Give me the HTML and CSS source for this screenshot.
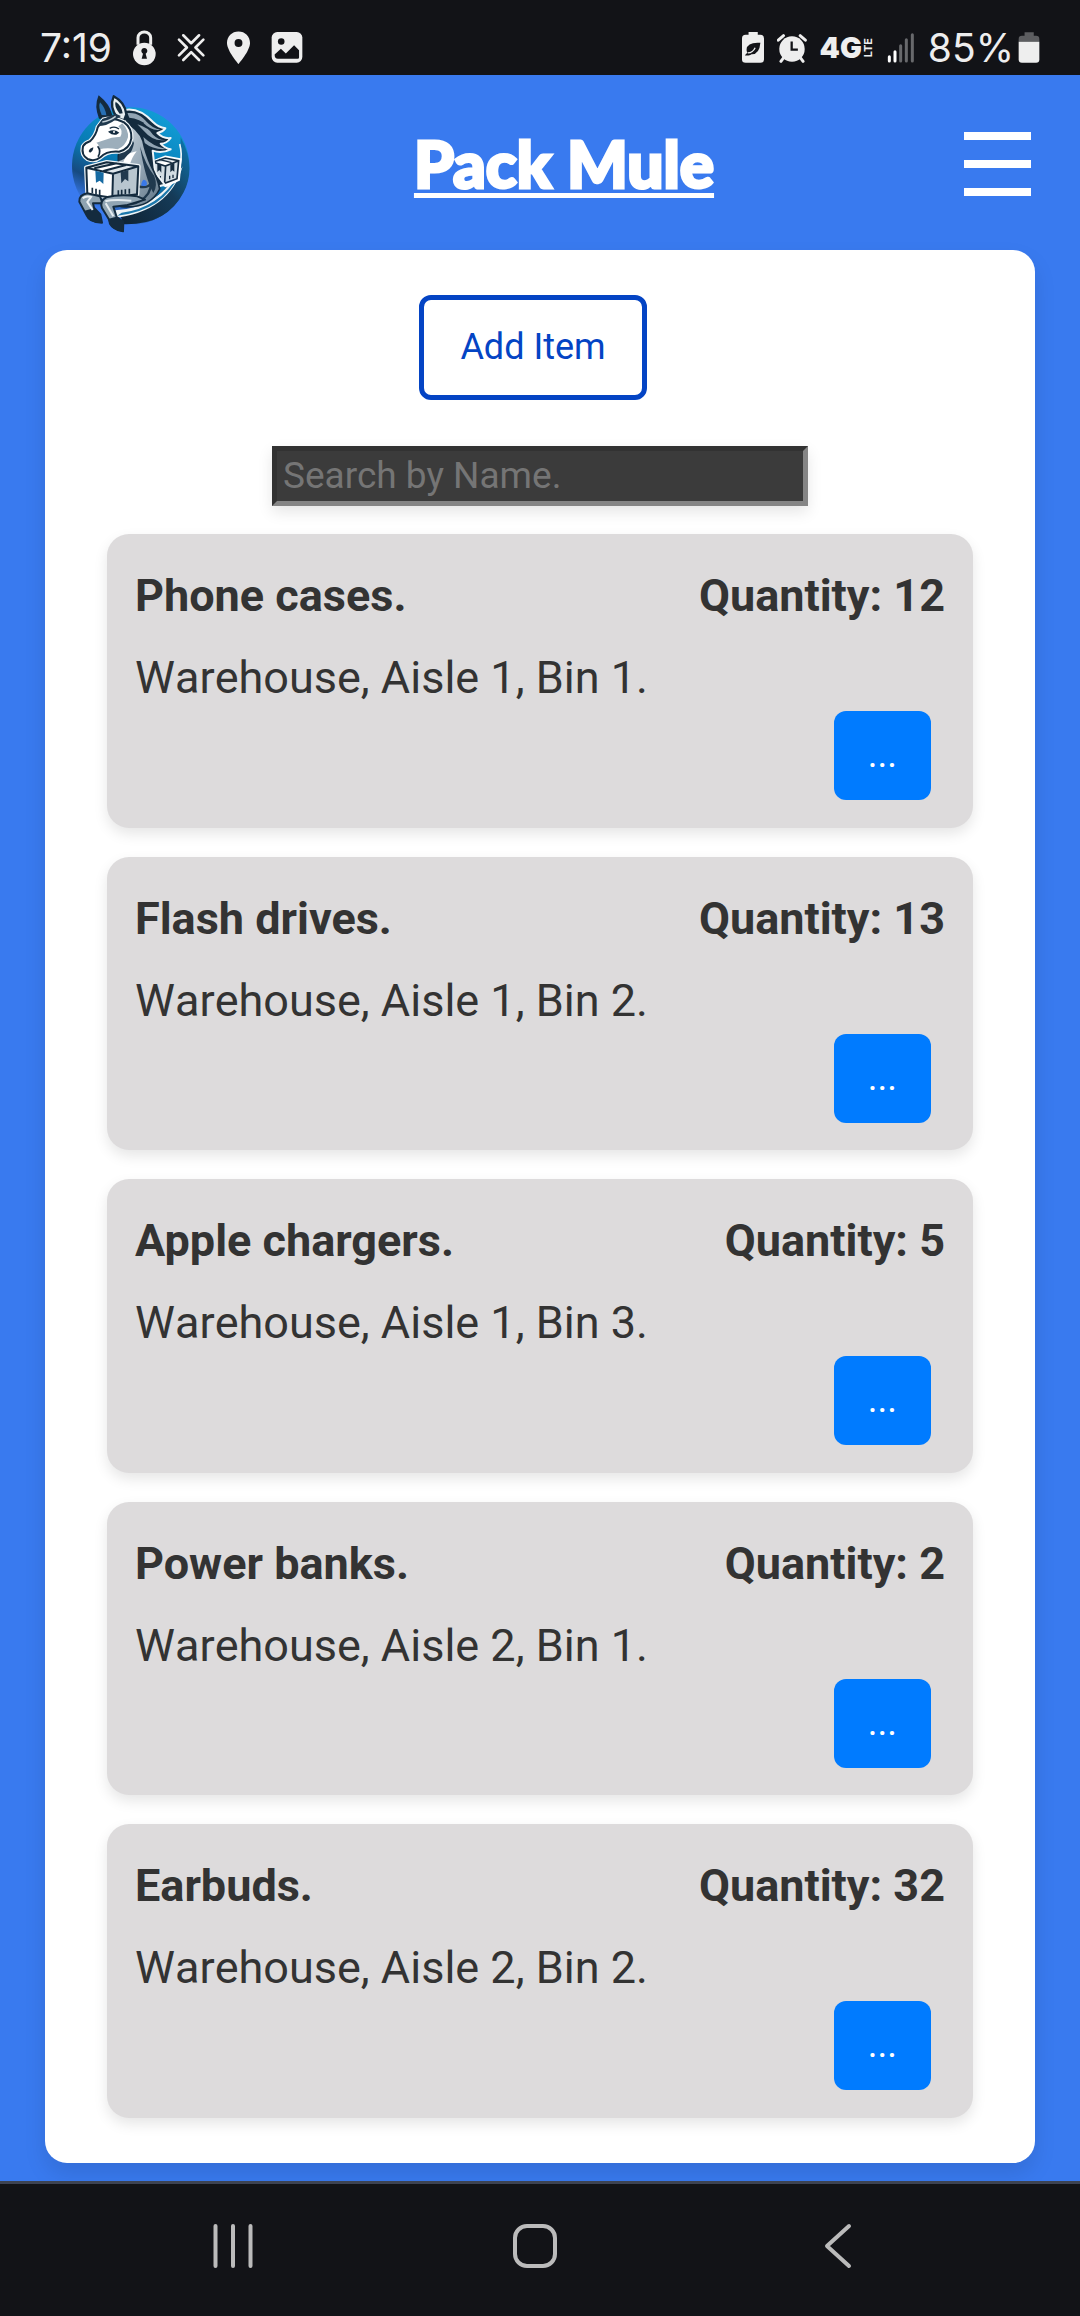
FILE: index.html
```html
<!DOCTYPE html>
<html lang="en">
<head>
<meta charset="utf-8">
<meta name="viewport" content="width=device-width">
<title>Pack Mule</title>
<link rel="stylesheet" href="styles.css">
</head>
<body>
<div class="status">
  <div class="status-left">
    <span class="status-text clock">7:19</span>
    <svg width="25" height="36" viewBox="405 88 75 108"><path d="M423 132V111a19 17 0 0 1 38 0v21" fill="none" stroke="#eee" stroke-width="9"/><circle cx="442" cy="160" r="34" fill="#eee"/><path d="M434 174l4-15a9 9 0 1 1 8 0l4 15z" fill="#121317"/></svg>
    <svg width="29" height="29" viewBox="540 98 88 88" fill="none" stroke="#eee" stroke-width="8" stroke-linecap="round" stroke-linejoin="round"><path d="M559 105l24 24 24-24M559 180l24-24 24 24M546 118l24 24-24 24M620 118l-24 24 24 24"/></svg>
    <svg width="25" height="34" viewBox="687 92 76 102"><path fill="#eee" fill-rule="evenodd" d="M725 93c-20 0-35 15-35 35 0 24 35 64 35 64s35-40 35-64c0-20-15-35-35-35zm0 23a12 12 0 1 1 0 24 12 12 0 0 1 0-24z"/></svg>
    <svg width="32" height="33" viewBox="817 94 97 98"><rect x="819" y="96" width="93" height="93" rx="17" fill="#eee"/><circle cx="848" cy="125" r="10" fill="#121317"/><path d="M828 164l19-17 15 14 25-25 15 15v22q0 4-4 4h-60q-10 0-10-13z" fill="#121317"/></svg>
  </div>
  <div class="status-right">
    <svg width="22" height="33" viewBox="110 95 67 97"><path fill="#eee" d="M130 96h28v9h8q11 0 11 11v64q0 10-11 10h-45q-11 0-11-10v-64q0-11 11-11h9z"/><path d="M166 129q-40-3-42 20-1 6 3 11-5 1-8 8h11q6-1 9-4 24 1 27-35z" fill="#121317"/><path d="M128 160q15-1 22-16" fill="none" stroke="#eee" stroke-width="4"/></svg>
    <svg width="30" height="30" viewBox="226 98 92 90" fill="none" stroke="#eee"><circle cx="272" cy="146" r="39" fill="#eee" stroke="none"/><path d="M230 119l16-14M313 119l-16-14M246 173l-8 11M298 173l8 11" stroke-width="9" stroke-linecap="round"/><path d="M271 123v25h19" stroke="#121317" stroke-width="7"/></svg>
    <span class="network"><b class="gen">4G</b><b class="lte">LTE</b></span>
    <svg width="28" height="30" viewBox="563 98 84 90" stroke-width="9" stroke-linecap="round"><path d="M570 169v13M587 154v28" stroke="#fff"/><path d="M604 136v46M621 118v64M639 103v79" stroke="#68696c"/></svg>
    <span class="charge"><span class="status-text">85%</span>
    <svg width="22" height="32" viewBox="952 94 67 96"><path fill="#5c5d60" d="M972 94h28v11h7q10 0 10 10v8h-63v-8q0-10 10-10h8z"/><path fill="#eee" d="M954 123h63v54q0 10-10 10h-43q-10 0-10-10z"/></svg></span>
  </div>
</div>

<header class="header">
  <svg class="logo" viewBox="60 45 366 426" role="img" aria-label="Mule carrying boxes">
    <defs>
      <linearGradient id="disc" x1=".75" y1="0" x2=".25" y2="1"><stop offset="0" stop-color="#129fd8"/><stop offset=".5" stop-color="#087bb4"/><stop offset=".72" stop-color="#164a80"/><stop offset=".9" stop-color="#397aef"/></linearGradient>
      <linearGradient id="coat" x1="0" y1="0" x2="1" y2="1"><stop offset="0" stop-color="#dce4e9"/><stop offset=".6" stop-color="#94a6b4"/><stop offset="1" stop-color="#5e7385"/></linearGradient>
      <linearGradient id="edge" x1="1" y1="0" x2="0" y2="1"><stop offset="0" stop-color="#0d79b5"/><stop offset=".45" stop-color="#153b58"/><stop offset="1" stop-color="#0e2233"/></linearGradient>
    </defs>
    <circle cx="242" cy="264" r="176" fill="url(#disc)"/>
    <path d="M392 178Q440 265 401 343Q350 442 222 439L205 400Q340 390 392 250z" fill="url(#edge)"/>
    <path d="M398 265Q360 402 188 421L196 397Q330 390 398 265z" fill="#eef4f7"/>
    <path d="M388 288Q342 398 202 413L215 404Q325 392 388 288z" fill="#1c78ac"/>
    <path d="M389 198Q405 258 365 312Q335 358 285 379" fill="none" stroke="#edf5f8" stroke-width="5"/>
    <path d="M307 252l39-15 45 8-5 60-39 18-40-18z" fill="#fff" stroke="#fff" stroke-width="8"/>
    <path d="M309 252l37-12 40 8-5 54-37 14-35-16zM309 252l37 12 40-16M347 264l-3 51" fill="#d3dde3" stroke="#152b3e" stroke-width="5"/>
    <path d="M322 257v25l6-6 6 8v-24zM361 260v23l6-6 6 4v-27z" fill="#152b3e"/>
    <path d="M327 244l38 10M322 291v10M331 294v10M359 293v11M369 290v10" stroke="#152b3e" stroke-width="4"/>
    <!-- mane -->
    <path d="M205 102Q258 78 309 132Q325 148 346 151Q338 162 322 165Q340 183 362 180Q350 197 332 197Q344 211 362 214Q335 228 308 218L315 282 344 320 270 340 225 130z" fill="#142b3e" stroke="#eef4f7" stroke-width="6" stroke-linejoin="round"/>
    <path d="M232 105Q275 101 299 146Q266 120 238 119zM262 139Q297 150 309 170Q330 190 349 185Q312 194 281 158zM280 177Q310 206 348 213Q310 216 284 195zM285 127Q310 154 331 155Q305 160 281 136z" fill="#91a4b3"/>
    <!-- neck and chest -->
    <path d="M218 128Q267 152 279 189Q286 224 303 263Q324 303 329 333Q300 393 215 386L165 370 205 325 205 231 236 200z" fill="url(#coat)" stroke="#142b3e" stroke-width="5"/>
    <path d="M236 165Q230 218 207 228L205 250Q245 238 252 195zM270 205Q285 258 313 294Q324 325 310 345Q285 300 270 205z" fill="#20394e"/>
    <path d="M240 225Q220 239 219 260L240 261Q243 242 260 220z" fill="#fff"/>
    <path d="M280 305Q294 307 290 322L276 331Q270 316 280 305z" fill="#3978e8"/>
    <path d="M265 325Q291 333 303 316Q303 350 270 369Q237 387 187 379" fill="none" stroke="#20394e" stroke-width="7"/>
    <!-- ears -->
    <path d="M149 120Q135 84 147 56Q176 79 184 110L176 122z" fill="#142b3e" stroke="#142b3e" stroke-width="5"/>
    <path d="M155 111Q144 86 150 73Q166 89 169 112z" fill="#2870b4"/>
    <path d="M202 119Q177 88 191 55Q225 73 229 109L222 128z" fill="#e9eff2" stroke="#142b3e" stroke-width="7" stroke-linejoin="round"/>
    <path d="M209 107Q191 84 197 71Q215 83 218 106z" fill="#142b3e"/>
    <!-- head -->
    <path d="M160 125Q192 116 222 133Q246 150 244 181Q239 213 207 221Q170 218 151 238Q134 252 113 243Q93 232 99 205Q106 194 120 190Q139 171 143 148z" fill="#fff" stroke="#eef4f7" stroke-width="13" stroke-linejoin="round"/>
    <path d="M160 125Q192 116 222 133Q246 150 244 181Q239 213 207 221Q170 218 151 238Q134 252 113 243Q93 232 99 205Q106 194 120 190Q139 171 143 148z" fill="#fff" stroke="#142b3e" stroke-width="6"/>
    <path d="M217 136Q236 156 234 178Q227 204 203 214Q172 208 148 214Q149 200 139 194L185 179 211 176Q221 158 205 145z" fill="#9caebb"/>
    <path d="M141 145Q173 145 198 124L213 114 197 107Q174 116 157 124z" fill="#20394e"/>
    <path d="M157 132Q178 129 197 115" stroke="#c2ced6" stroke-width="5" fill="none"/>
    <path d="M174 161Q192 151 208 164L199 170Q185 172 178 164z" fill="#142b3e"/><circle cx="192" cy="162" r="3" fill="#fff"/>
    <path d="M179 151Q194 143 207 153" fill="none" stroke="#142b3e" stroke-width="4"/>
    <path d="M116 220Q118 211 130 208Q130 220 120 224z" fill="#142b3e"/>
    <path d="M143 205Q155 220 144 236" fill="none" stroke="#142b3e" stroke-width="5"/>
    <!-- front box -->
    <path d="M109 269l61-16 95 12-4 84-73 10-75-11z" fill="#fff" stroke="#eef4f7" stroke-width="14" stroke-linejoin="round"/>
    <path d="M109 269l61-16 95 12-76 22z" fill="#dfe7ec"/><path d="M109 269l80 18-2 72-75-11z" fill="#fff"/><path d="M189 287l76-22-4 84-74 10z" fill="#b8c6cf"/>
    <path d="M136 273l67-16 26 4-66 20z" fill="#fff"/>
    <path d="M109 269l61-16 95 12-4 84-74 10-75-11zM109 269l80 18 76-22M189 287l-2 72M133 271l67-15M160 279l68-18" fill="none" stroke="#142b3e" stroke-width="6" stroke-linejoin="round"/>
    <path d="M136 278l25 6-1 34-11-10-11 6z" fill="#176ba3"/><path d="M212 283l23-7v34l-10-7-11 13z" fill="#20394e"/>
    <path d="M127 329v17M138 332v17M149 335v17M205 337v16M215 335v16M226 334v15M238 332v15" stroke="#142b3e" stroke-width="5"/>
    <!-- forelegs -->
    <path d="M112 346Q87 350 88 371L111 414Q117 432 156 434L151 409 132 389 129 376 158 376 150 355z" fill="#8fa3b1" stroke="#142b3e" stroke-width="6" stroke-linejoin="round"/>
    <path d="M103 398l29-7 19 17 6 26q-35 3-45-17z" fill="#142b3e"/>
    <path d="M98 361Q108 352 123 357L112 372 128 396" fill="none" stroke="#edf2f5" stroke-width="6"/>
    <path d="M262 355Q210 347 169 358Q148 369 156 390L178 426Q184 455 219 460L220 431 200 417 190 386 228 382 285 365z" fill="#91a5b3" stroke="#142b3e" stroke-width="6" stroke-linejoin="round"/>
    <path d="M174 423l25-7 22 15-1 31q-34-5-43-24z" fill="#142b3e"/>
    <path d="M166 370Q190 363 244 368M167 376L190 415" fill="none" stroke="#e5ecf0" stroke-width="6"/>
  </svg>
  <h1 class="brand">Pack Mule</h1>
  <button class="menu" type="button" aria-label="Menu"><span class="bar"></span><span class="bar"></span><span class="bar"></span></button>
</header>

<main class="panel">
  <button class="add" type="button">Add Item</button>
  <input class="search" type="text" placeholder="Search by Name." aria-label="Search by Name">
  <section class="items">
    <article class="card"><div class="card-head"><h2>Phone cases.</h2><h2>Quantity: 12</h2></div><p class="place">Warehouse, Aisle 1, Bin 1.</p><button class="more" type="button">...</button></article>
    <article class="card"><div class="card-head"><h2>Flash drives.</h2><h2>Quantity: 13</h2></div><p class="place">Warehouse, Aisle 1, Bin 2.</p><button class="more" type="button">...</button></article>
    <article class="card"><div class="card-head"><h2>Apple chargers.</h2><h2>Quantity: 5</h2></div><p class="place">Warehouse, Aisle 1, Bin 3.</p><button class="more" type="button">...</button></article>
    <article class="card"><div class="card-head"><h2>Power banks.</h2><h2>Quantity: 2</h2></div><p class="place">Warehouse, Aisle 2, Bin 1.</p><button class="more" type="button">...</button></article>
    <article class="card"><div class="card-head"><h2>Earbuds.</h2><h2>Quantity: 32</h2></div><p class="place">Warehouse, Aisle 2, Bin 2.</p><button class="more" type="button">...</button></article>
  </section>
</main>

<nav class="navbar">
  <button type="button" aria-label="Recent apps"><svg width="48" height="48" viewBox="0 0 48 48"><path d="M6.500 4v40M24 4v40M41.500 4v40"/></svg></button>
  <button type="button" aria-label="Home"><svg width="48" height="48" viewBox="0 0 48 48"><rect x="4" y="4" width="40" height="40" rx="12"/></svg></button>
  <button type="button" aria-label="Back"><svg width="48" height="48" viewBox="0 0 48 48"><path d="M35 4L13 24l22 20"/></svg></button>
</nav>
</body>
</html>
```
FILE: styles.css
```css
* {
  box-sizing: border-box;
}

body {
  display: flex;
  flex-direction: column;
  min-height: 100vh;
  margin: 0;
  background: #397aef;
  color: #333;
  font-family: Roboto, sans-serif;
}

h1,
h2,
p {
  margin: 0;
}

button {
  padding: 0;
  border: 0;
  background: none;
  font-family: inherit;
}

svg {
  display: block;
  flex: none;
}

.status {
  display: flex;
  justify-content: space-between;
  height: 75px;
  padding: 20px 40px 0;
  background: #121317;
  color: #eee;
}

.status-left,
.status-right,
.charge {
  display: flex;
  align-items: center;
}

.status-left {
  gap: 20px;
}

.status-right {
  gap: 13px;
}

.charge {
  gap: 4px;
}

.status-text {
  font-family: Inter, sans-serif;
  font-size: 39px;
  font-weight: 400;
  line-height: 48px;
}

.network {
  display: flex;
  align-items: center;
  gap: 1px;
  font-family: Inter, sans-serif;
}

.gen {
  font-size: 29px;
  font-weight: 900;
  line-height: 28px;
}

.lte {
  font-size: 11px;
  line-height: 11px;
  writing-mode: vertical-rl;
  transform: rotate(180deg);
}

.header {
  display: flex;
  justify-content: space-between;
  align-items: center;
  height: 175px;
  padding: 3px 49px 0 70px;
}

.logo {
  width: 122px;
  height: 142px;
}

.brand {
  color: #fff;
  font-family: Lato, sans-serif;
  font-size: 64px;
  font-weight: 900;
  line-height: 80px;
  text-decoration: underline;
  text-decoration-thickness: 5px;
  text-decoration-skip-ink: none;
  text-underline-offset: 5px;
  -webkit-text-stroke: 3px #fff;
}

.menu {
  display: flex;
  flex-direction: column;
  gap: 20px;
  padding-left: 28px;
}

.bar {
  width: 67px;
  height: 8px;
  background: #fff;
}

.panel {
  display: flex;
  flex: 1;
  flex-direction: column;
  align-items: center;
  margin: 0 45px 18px;
  padding: 45px 62px;
  border-radius: 22px;
  background: #fff;
  box-shadow: 0 11px 22px rgba(0, 0, 0, 0.1);
}

.add {
  height: 105px;
  margin: 0 14px 46px 0;
  padding: 0 36px 2px;
  border: 5px solid #0444c4;
  border-radius: 12px;
  background: #fff;
  color: #0444c4;
  font-size: 36px;
}

.search {
  width: 536px;
  max-width: 100%;
  height: 60px;
  margin-bottom: 28px;
  padding: 0 6px 2px;
  border: 5px solid;
  border-color: #323232 #858585 #858585 #323232;
  border-radius: 0;
  background: #3b3b3b;
  box-shadow: 0 6px 14px rgba(0, 0, 0, 0.1);
  color: #fff;
  font-family: inherit;
  font-size: 37px;
}

.search::placeholder {
  color: #757575;
}

.items {
  display: flex;
  flex: 1;
  flex-direction: column;
  align-self: stretch;
  gap: 29px;
}

.card {
  display: flex;
  flex: 1;
  flex-direction: column;
  padding: 36px 28px 27px;
  border-radius: 22px;
  background: #dddbdc;
  box-shadow: 0 6px 14px rgba(0, 0, 0, 0.1);
}

.card-head {
  display: flex;
  justify-content: space-between;
  margin-bottom: 30px;
}

.card h2,
.place {
  font-size: 45px;
  line-height: 52px;
}

.place {
  font-kerning: none;
}

.more {
  align-self: flex-end;
  width: 97px;
  height: 89px;
  margin: 7px 14px 0 0;
  padding-bottom: 2px;
  border-radius: 12px;
  background: #007bff;
  color: #fff;
  font-size: 37px;
}

.navbar {
  display: grid;
  grid-template-columns: repeat(3, 1fr);
  justify-items: center;
  align-items: center;
  height: 135px;
  padding: 0 91px 8px 82px;
  border-top: 3px solid #3d4352;
  background: #121317;
}

.navbar svg {
  fill: none;
  stroke: #bbb;
  stroke-width: 4;
  stroke-linecap: round;
  stroke-linejoin: round;
}
```
